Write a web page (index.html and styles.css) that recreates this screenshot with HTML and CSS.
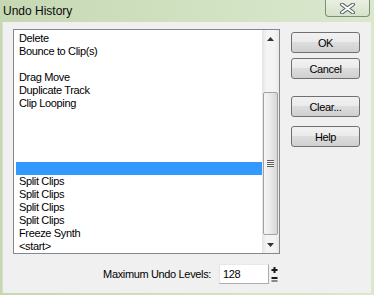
FILE: index.html
```html
<!DOCTYPE html>
<html lang="en">
<head>
  <meta charset="UTF-8" />
  <title>Undo History</title>
  <link rel="stylesheet" href="styles.css">
</head>
<body>
  <div class="window">
    <div class="titlebar">
      <span class="title">Undo History</span>
      <button class="close" aria-label="Close">
        <svg width="17" height="11" viewBox="0 0 17 11">
          <path d="M3 1.5 L14 9.5 M14 1.5 L3 9.5" stroke="#5a5f66" stroke-width="4" stroke-linecap="round"/>
          <path d="M3 1.5 L14 9.5 M14 1.5 L3 9.5" stroke="#fff" stroke-width="2" stroke-linecap="round"/>
        </svg>
      </button>
    </div>

    <div class="client">
      <div class="main">
        <div class="listbox">
          <ul class="rows">
            <li>Delete</li>
            <li>Bounce to Clip(s)</li>
            <li></li>
            <li>Drag Move</li>
            <li>Duplicate Track</li>
            <li>Clip Looping</li>
            <li></li>
            <li></li>
            <li></li>
            <li></li>
            <li class="selected"></li>
            <li>Split Clips</li>
            <li>Split Clips</li>
            <li>Split Clips</li>
            <li>Split Clips</li>
            <li>Freeze Synth</li>
            <li>&lt;start&gt;</li>
          </ul>
          <div class="vscroll">
            <div class="arrow">
              <svg width="7" height="4" viewBox="0 0 7 4"><path d="M0 4 L3.5 0 L7 4 Z" fill="#333"/></svg>
            </div>
            <div class="track-top"></div>
            <div class="thumb"><span class="grip"></span></div>
            <div class="track-bottom"></div>
            <div class="arrow">
              <svg width="7" height="4" viewBox="0 0 7 4"><path d="M0 0 L7 0 L3.5 4 Z" fill="#333"/></svg>
            </div>
          </div>
        </div>

        <div class="buttons">
          <button class="btn btn-ok">OK</button>
          <button class="btn btn-cancel">Cancel</button>
          <button class="btn btn-clear">Clear...</button>
          <button class="btn btn-help">Help</button>
        </div>
      </div>

      <div class="levels">
        <label for="undoLevels">Maximum Undo Levels:</label>
        <input type="text" id="undoLevels" value="128" />
        <div class="spinner">
          <svg width="7" height="19" viewBox="0 0 7 19">
            <rect x="0.5" y="4" width="6" height="2" fill="#1a1a1a"/>
            <rect x="2.5" y="2" width="2" height="6" fill="#1a1a1a"/>
            <rect x="0.5" y="12" width="6" height="2" fill="#1a1a1a"/>
            <rect x="0.5" y="15" width="6" height="2" fill="#8a8a8a"/>
          </svg>
        </div>
      </div>
    </div>
  </div>
</body>
</html>
```

FILE: styles.css
```css
body {
  margin: 0;
  background: #ffffff;
  font-family: "Liberation Sans", Arial, sans-serif;
}
.window {
  width: 374px;
  height: 295px;
  box-sizing: border-box;
  padding: 0 3px 2px 2px;
  background: linear-gradient(to right, #c5d8b2, #d1e2c2 55%, #dae8ce);
  display: flex;
  flex-direction: column;
}
.titlebar {
  height: 22px;
  display: flex;
  justify-content: space-between;
  align-items: flex-start;
  flex-shrink: 0;
}
.title {
  padding: 4px 0 0 1px;
  font-size: 12px;
  line-height: 14px;
  color: #0b0b0b;
}
.close {
  width: 45px;
  height: 17px;
  margin-right: 1px;
  padding: 0;
  border: 1px solid #7f8d76;
  border-top: none;
  border-radius: 0 0 4px 4px;
  background: linear-gradient(#e9f0e2, #d5e2ca);
  display: flex;
  align-items: center;
  justify-content: center;
}
.client {
  flex: 1;
  background: #f0f0f0;
  border-left: 1px solid #d8ded2;
  padding: 7px 0 0 10px;
  font-size: 11px;
  letter-spacing: -0.35px;
  color: #000;
}
.main {
  display: flex;
  align-items: flex-start;
}
.listbox {
  width: 267px;
  height: 225px;
  box-sizing: border-box;
  border: 1px solid #828790;
  background: #fff;
  display: flex;
}
.rows {
  flex: 1;
  margin: 0;
  padding: 2px 0 0 2px;
  list-style: none;
  overflow: hidden;
}
.rows li {
  height: 13px;
  line-height: 13px;
  padding-left: 3px;
  white-space: nowrap;
}
.rows li.selected {
  background: #3399ff;
}
.vscroll {
  width: 17px;
  display: flex;
  flex-direction: column;
  background: linear-gradient(to right, #e3e3e3, #f4f4f4 25%, #f4f4f4 75%, #e8e8e8);
}
.arrow {
  height: 17px;
  display: flex;
  align-items: center;
  justify-content: center;
  flex-shrink: 0;
}
.track-top {
  height: 45px;
}
.track-bottom {
  height: 1px;
}
.thumb {
  height: 143px;
  margin: 0 1px;
  box-sizing: border-box;
  border: 1px solid #a2a2a2;
  border-radius: 2px;
  background: linear-gradient(to right, #f5f5f5, #e9e9e9 50%, #d6d6d6);
  display: flex;
  align-items: center;
  justify-content: center;
}
.grip {
  width: 7px;
  height: 7px;
  background: repeating-linear-gradient(#5e5e5e 0 1px, #f5f5f5 1px 2px);
}
.buttons {
  margin: 3px 0 0 11px;
  display: flex;
  flex-direction: column;
}
.btn {
  width: 69px;
  height: 21px;
  padding: 0;
  border: 1px solid #707070;
  border-radius: 3px;
  background: linear-gradient(#f2f2f2, #ebebeb 45%, #dddddd 50%, #cfcfcf);
  font-family: inherit;
  font-size: 11px;
  letter-spacing: -0.35px;
  color: #000;
}
.btn-cancel { margin-top: 5px; }
.btn-clear { margin-top: 17px; }
.btn-help { margin-top: 9px; }
.levels {
  width: 265px;
  margin-top: 10px;
  display: flex;
  align-items: center;
  justify-content: flex-end;
}
.levels label {
  margin-right: 8px;
}
.levels input {
  width: 50px;
  height: 20px;
  box-sizing: border-box;
  border: 1px solid #abadb3;
  border-top-color: #e3e9ef;
  border-left-color: #e2e3ea;
  padding: 0 0 0 3px;
  font-family: inherit;
  font-size: 11px;
  letter-spacing: -0.35px;
}
.spinner {
  margin-left: 2px;
  height: 19px;
}
```
